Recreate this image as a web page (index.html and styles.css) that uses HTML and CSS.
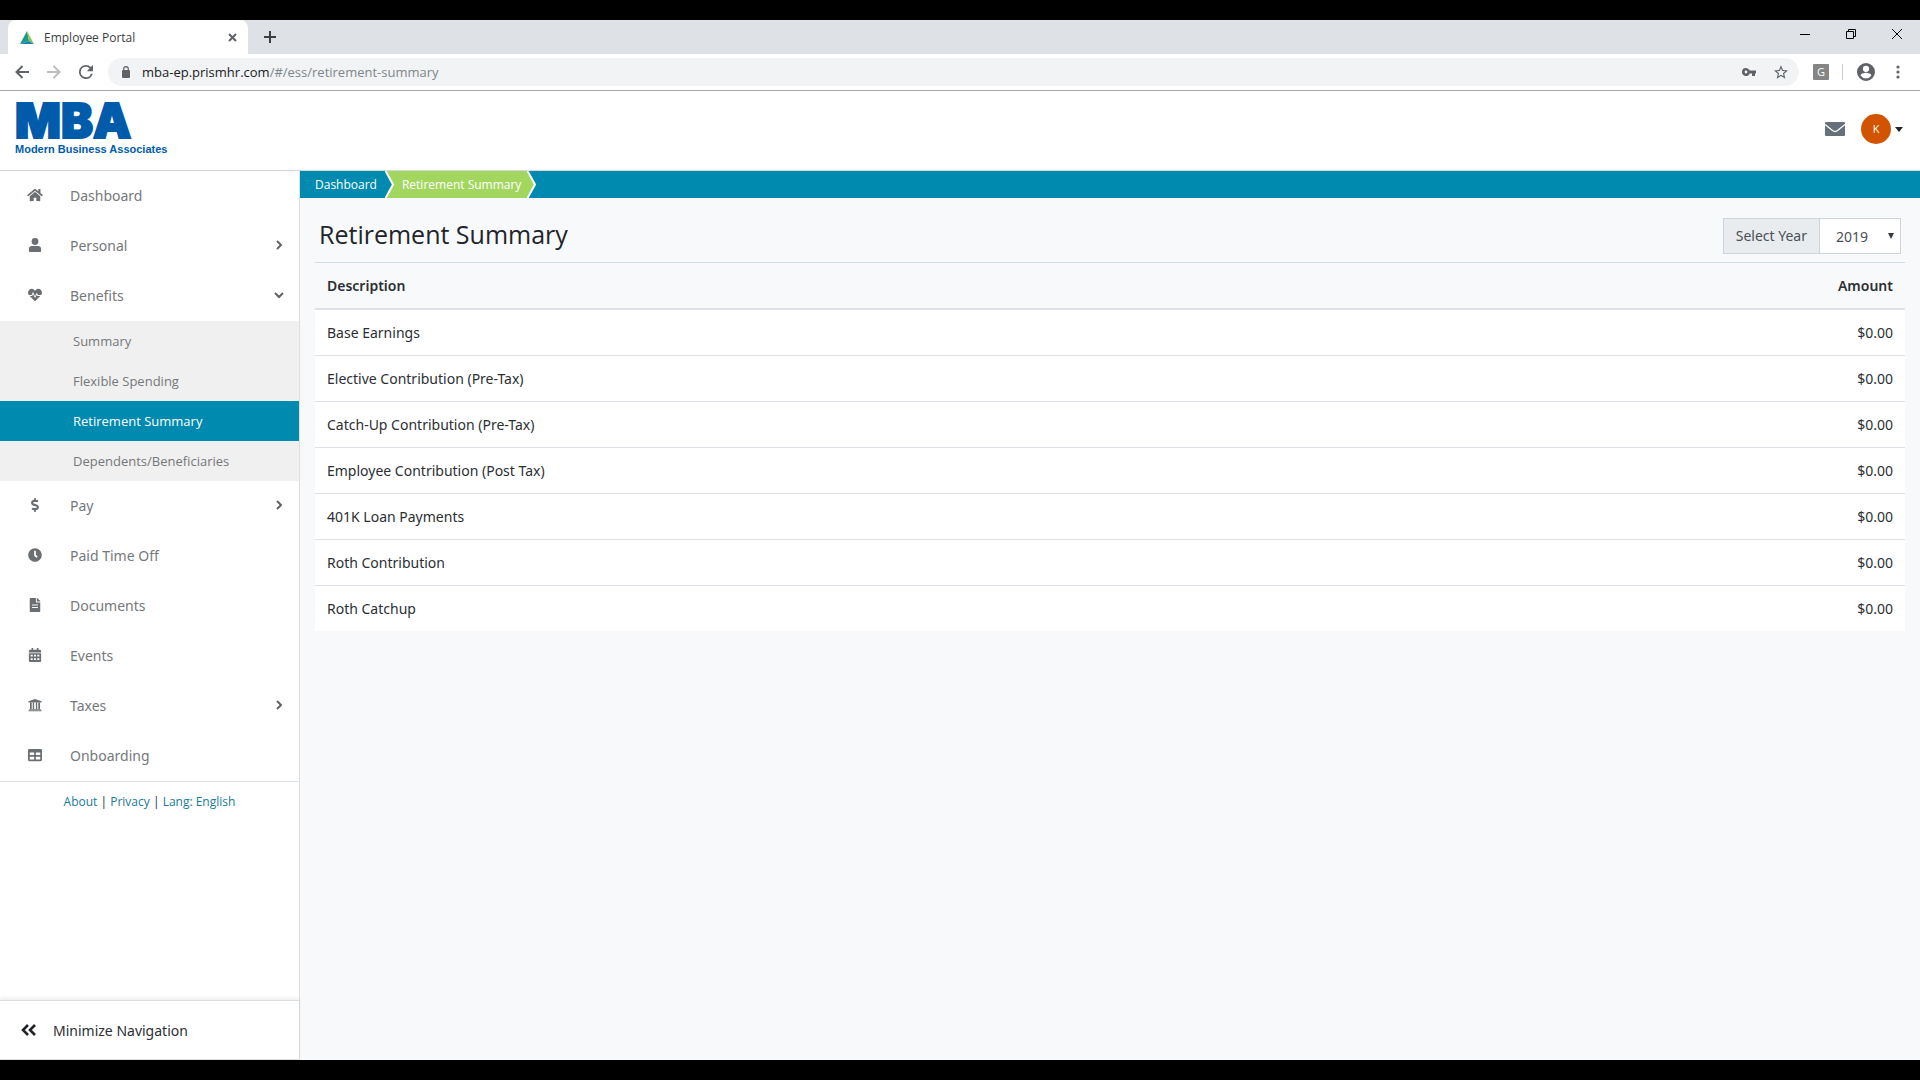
FILE: index.html
```html
<!DOCTYPE html>
<html lang="en">
<head>
<meta charset="utf-8">
<meta name="viewport" content="width=device-width, initial-scale=1">
<title>Employee Portal</title>
<link rel="stylesheet" href="styles.css">
</head>
<body>
<div class="browser">
  <div class="tab-strip">
    <div class="tab">
      <svg class="favicon" viewBox="0 0 14 13"><path d="M7 0 0 13l9-3z" fill="#1f9a86"/><path d="M7 0 9 10l5 3z" fill="#8fc552"/><path d="M0 13l9-3 5 3z" fill="#1683b5"/></svg>
      <span class="tab-title">Employee Portal</span>
      <button class="icon-button" aria-label="Close tab"><svg width="9" height="9" viewBox="0 0 9 9"><path d="M1 1l7 7M8 1L1 8" stroke="#5f6368" stroke-width="2" fill="none"/></svg></button>
    </div>
    <button class="icon-button new-tab" aria-label="New tab"><svg width="12" height="12" viewBox="0 0 12 12"><path d="M6 0v12M0 6h12" stroke="#3c4043" stroke-width="2"/></svg></button>
    <div class="window-controls">
      <button class="icon-button" aria-label="Minimize"><svg width="10" height="10" viewBox="0 0 10 10"><path d="M0 5.500h10" stroke="#000"/></svg></button>
      <button class="icon-button" aria-label="Restore"><svg width="10" height="10" viewBox="0 0 10 10"><path d="M.5 2.500h7v7h-7zM2.500 2.500v-2h7v7h-2" stroke="#000" fill="none"/></svg></button>
      <button class="icon-button" aria-label="Close"><svg width="10" height="10" viewBox="0 0 10 10"><path d="M0 0l10 10M10 0L0 10" stroke="#000"/></svg></button>
    </div>
  </div>
  <div class="toolbar">
    <button class="icon-button" aria-label="Back"><svg width="14" height="14" viewBox="0 0 14 14"><path d="M14 7H1.500M7.500 1l-6 6 6 6" stroke="#5f6368" stroke-width="2" fill="none"/></svg></button>
    <button class="icon-button" aria-label="Forward"><svg width="14" height="14" viewBox="0 0 14 14"><path d="M0 7h12.500M6.500 1l6 6-6 6" stroke="#bcbec0" stroke-width="2" fill="none"/></svg></button>
    <button class="icon-button" aria-label="Reload"><svg width="14" height="14" viewBox="4 4 16 16"><path fill="#5f6368" d="M17.650 6.350A7.960 7.960 0 0 0 12 4a8 8 0 1 0 7.730 10h-2.080A6 6 0 1 1 12 6c1.660 0 3.140.69 4.220 1.780L13 11h7V4z"/></svg></button>
    <div class="address">
      <svg width="8" height="12" viewBox="0 0 8 12"><path d="M0 5q0-1 1-1h6q1 0 1 1v6q0 1-1 1H1q-1 0-1-1z" fill="#5f6368"/><path d="M1.700 5V3a2.300 2.300 0 0 1 4.600 0v2" fill="none" stroke="#5f6368" stroke-width="1.200"/></svg>
      <span class="url">mba-ep.prismhr.com<span class="url-path">/#/ess/retirement-summary</span></span>
      <button class="icon-button" aria-label="Passwords"><svg width="14" height="8" viewBox="0 0 14 8"><path fill="#5f6368" fill-rule="evenodd" d="M4 0a4 4 0 1 0 3.700 5.400H10V8h3V5.400h1V2.600H7.700A4 4 0 0 0 4 0zm0 2.600a1.400 1.400 0 1 1 0 2.800 1.400 1.400 0 0 1 0-2.800z"/></svg></button>
      <button class="icon-button" aria-label="Bookmark"><svg width="14" height="14" viewBox="2 2 20 19"><path fill="#5f6368" d="M22 9.240l-7.190-.62L12 2 9.190 8.630 2 9.240l5.460 4.730L5.820 21 12 17.270 18.180 21l-1.630-7.030zM12 15.400l-3.760 2.270 1-4.280-3.320-2.880 4.380-.38L12 6.100l1.710 4.040 4.380.38-3.320 2.880 1 4.280z"/></svg></button>
    </div>
    <button class="extension" aria-label="Extension">G</button>
    <span class="divider"></span>
    <button class="icon-button profile" aria-label="Profile"><svg width="18" height="18" viewBox="2 2 20 20"><path fill="#5f6368" d="M12 2a10 10 0 1 0 0 20 10 10 0 0 0 0-20zm0 3a3.500 3.500 0 1 1 0 7 3.500 3.500 0 0 1 0-7zm0 14.200a7.200 7.200 0 0 1-6-3.220c.03-1.990 4-3.080 6-3.080s5.970 1.090 6 3.080a7.200 7.200 0 0 1-6 3.220z"/></svg></button>
    <button class="icon-button" aria-label="Menu"><svg width="4" height="14" viewBox="0 0 4 14"><g fill="#5f6368"><circle cx="2" cy="2" r="1.600"/><circle cx="2" cy="7" r="1.600"/><circle cx="2" cy="12" r="1.600"/></g></svg></button>
  </div>
</div>

<header class="site-header">
  <a class="logo" href="#">
    <span class="logo-name">MBA</span>
    <span class="logo-tag">Modern Business Associates</span>
  </a>
  <div class="account">
    <button class="icon-button" aria-label="Messages"><svg width="20" height="14" viewBox="0 0 20 14"><rect width="20" height="14" rx="1" fill="#66717b"/><path d="M0 2.500l7.500 6q2.500 2 5 0l7.500-6" fill="none" stroke="#fff" stroke-width="1.300"/></svg></button>
    <button class="user-menu"><span class="avatar">K</span><svg width="8" height="5" viewBox="0 0 8 5"><path d="M0 0h8L4 5z" fill="#212529"/></svg></button>
  </div>
</header>

<div class="layout">
  <nav class="sidebar">
    <ul class="menu">
      <li><a class="item" href="#"><svg class="item-icon" viewBox="0 0 576 512"><path d="M280.370 148.260L96 300.110V464a16 16 0 0 0 16 16l112.060-.29a16 16 0 0 0 15.920-16V368a16 16 0 0 1 16-16h64a16 16 0 0 1 16 16v95.640a16 16 0 0 0 16 16.050L464 480a16 16 0 0 0 16-16V300L295.670 148.260a12.190 12.190 0 0 0-15.300 0zM571.600 251.470L488 182.560V44.050a12 12 0 0 0-12-12h-56a12 12 0 0 0-12 12v72.610L318.470 43a48 48 0 0 0-61 0L4.340 251.470a12 12 0 0 0-1.600 16.900l25.500 31A12 12 0 0 0 45.150 301l235.220-193.740a12.190 12.190 0 0 1 15.300 0L530.900 301a12 12 0 0 0 16.900-1.600l25.500-31a12 12 0 0 0-1.700-16.930z"/></svg><span>Dashboard</span></a></li>
      <li><a class="item" href="#"><svg class="item-icon" viewBox="0 0 448 512"><circle cx="224" cy="128" r="124"/><path d="M110 288h228c62 0 110 48 110 110v66c0 26-22 48-48 48H48c-26 0-48-22-48-48v-66c0-62 48-110 110-110z"/></svg><span>Personal</span><svg class="chevron" viewBox="0 0 10 10"><path d="M3 1l4 4-4 4"/></svg></a></li>
      <li>
        <a class="item" href="#"><svg class="item-icon" viewBox="0 0 512 512"><path d="M320.200 243.800l-49.700 99.400c-6 12.100-23.400 11.700-28.900-.6l-56.900-126.300-30 71.700H60.600l182.500 186.500c7.100 7.300 18.600 7.300 25.700 0L451.400 288H342.300l-22.100-44.200zM473.700 73.900l-2.400-2.500c-51.500-52.600-135.800-52.600-187.400 0L256 100l-27.900-28.500c-51.500-52.700-135.900-52.700-187.400 0l-2.400 2.400C-10.400 123.700-12.500 203 31 256h102.400l35.900-86.200c5.400-12.900 23.600-13.200 29.400-.4l58.200 129.300 49-97.900c5.900-11.800 22.700-11.800 28.600 0l27.600 55.200H481c43.500-53 41.400-132.300-7.300-182.100z"/></svg><span>Benefits</span><svg class="chevron" viewBox="0 0 10 10"><path d="M1 3l4 4 4-4"/></svg></a>
        <ul class="submenu">
          <li><a class="subitem" href="#">Summary</a></li>
          <li><a class="subitem" href="#">Flexible Spending</a></li>
          <li><a class="subitem active" href="#" aria-current="page">Retirement Summary</a></li>
          <li><a class="subitem" href="#">Dependents/Beneficiaries</a></li>
        </ul>
      </li>
      <li><a class="item" href="#"><svg class="item-icon" viewBox="0 0 288 512"><path d="M209.200 233.400l-108-31.600C88.700 198.200 80 186.500 80 173.500c0-16.300 13.200-29.500 29.500-29.500h66.300c12.200 0 24.200 3.700 34.200 10.500 6.100 4.100 14.300 3.100 19.500-2l34.800-34c7.100-6.900 6.100-18.400-1.800-24.500C238 74.800 207.400 64.100 176 64V16c0-8.800-7.200-16-16-16h-32c-8.800 0-16 7.200-16 16v48h-2.500C45.800 64-5.400 118.700.5 183.600c4.200 46.100 39.400 83.600 83.800 96.600l102.500 30c12.500 3.700 21.200 15.300 21.200 28.300 0 16.300-13.200 29.500-29.500 29.500h-66.300C100 368 88 364.300 78 357.500c-6.100-4.100-14.300-3.100-19.500 2l-34.800 34c-7.100 6.900-6.100 18.400 1.800 24.500 24.500 19.200 55.100 29.900 86.500 30v48c0 8.800 7.200 16 16 16h32c8.800 0 16-7.200 16-16v-48.200c46.600-.9 90.300-28.600 105.700-72.700 21.500-61.600-14.600-124.800-72.500-141.700z"/></svg><span>Pay</span><svg class="chevron" viewBox="0 0 10 10"><path d="M3 1l4 4-4 4"/></svg></a></li>
      <li><a class="item" href="#"><svg class="item-icon" viewBox="0 0 512 512"><path d="M256 8C119 8 8 119 8 256s111 248 248 248 248-111 248-248S393 8 256 8zm92.490 313l-20 25a16 16 0 0 1-22.490 2.500l-67-49.720a40 40 0 0 1-15-31.230V112a16 16 0 0 1 16-16h32a16 16 0 0 1 16 16v144l58 42.500a16 16 0 0 1 2.490 22.500z"/></svg><span>Paid Time Off</span></a></li>
      <li><a class="item" href="#"><svg class="item-icon" viewBox="0 0 384 512"><path fill-rule="evenodd" d="M224 136V0H24C10.700 0 0 10.700 0 24v464c0 13.300 10.700 24 24 24h336c13.300 0 24-10.700 24-24V160H248c-13.200 0-24-10.800-24-24zM84 236h216v40H84zm0 92h216v40H84zM384 121.900v6.100H256V0h6.100c6.400 0 12.500 2.500 17 7l97.900 98c4.500 4.500 7 10.600 7 16.900z"/></svg><span>Documents</span></a></li>
      <li><a class="item" href="#"><svg class="item-icon" viewBox="0 0 448 512"><path fill-rule="evenodd" d="M0 160v-48c0-26 22-48 48-48h48V12q0-12 12-12h40q12 0 12 12v52h128V12q0-12 12-12h40q12 0 12 12v52h48c26 0 48 22 48 48v48zM0 192h448v272c0 26-22 48-48 48H48c-26 0-48-22-48-48zm64 52v64h76v-64zm122 0v64h76v-64zm122 0v64h76v-64zM64 372v64h76v-64zm122 0v64h76v-64zm122 0v64h76v-64z"/></svg><span>Events</span></a></li>
      <li><a class="item" href="#"><svg class="item-icon" viewBox="0 0 512 512"><path d="M256 32L16 122v38h480v-38zM16 448h480v40H16zM44 404h424v28H44zM72 176h64v228H72zm102 0h50v228h-50zm114 0h50v228h-50zm88 0h64v228h-64z"/></svg><span>Taxes</span><svg class="chevron" viewBox="0 0 10 10"><path d="M3 1l4 4-4 4"/></svg></a></li>
      <li><a class="item" href="#"><svg class="item-icon" viewBox="0 0 512 512"><path fill-rule="evenodd" d="M464 32H48C22 32 0 54 0 80v352c0 26 22 48 48 48h416c26 0 48-22 48-48V80c0-26-22-48-48-48zM224 416H64v-96h160zm0-160H64v-96h160zm224 160H288v-96h160zm0-160H288v-96h160z"/></svg><span>Onboarding</span></a></li>
    </ul>
    <div class="legal"><a href="#">About</a> | <a href="#">Privacy</a> | <a href="#">Lang: English</a></div>
    <button class="minimize"><svg width="16" height="12" viewBox="0 0 16 12"><path d="M7 1L2 6l5 5M14 1L9 6l5 5" fill="none" stroke="#212529" stroke-width="2.600"/></svg><span>Minimize Navigation</span></button>
  </nav>

  <main class="content">
    <nav class="breadcrumb" aria-label="Breadcrumb">
      <a class="crumb" href="#">Dashboard</a>
      <svg class="crumb-edge" viewBox="0 0 10 27"><path class="edge-current" d="M0 0h10v27H0z"/><path class="edge-bar" d="M0 0l8 13.500L0 27z"/><path class="edge-line" d="M0-1l8 14.500L0 28"/></svg>
      <span class="crumb current">Retirement Summary</span>
      <svg class="crumb-edge" viewBox="0 0 10 27"><path class="edge-current" d="M0 0l8 13.500L0 27z"/><path class="edge-line" d="M0-1l8 14.500L0 28"/></svg>
    </nav>
    <div class="page-head">
      <h1>Retirement Summary</h1>
      <div class="year">
        <label for="year">Select Year</label>
        <div class="year-field">
          <select id="year"><option>2019</option><option>2018</option></select>
          <svg class="year-arrow" viewBox="0 0 6 6"><path d="M0 0h6L3 6z" fill="#343a40"/></svg>
        </div>
      </div>
    </div>
    <table class="summary">
      <thead><tr><th scope="col">Description</th><th scope="col">Amount</th></tr></thead>
      <tbody>
        <tr><td>Base Earnings</td><td>$0.00</td></tr>
        <tr><td>Elective Contribution (Pre-Tax)</td><td>$0.00</td></tr>
        <tr><td>Catch-Up Contribution (Pre-Tax)</td><td>$0.00</td></tr>
        <tr><td>Employee Contribution (Post Tax)</td><td>$0.00</td></tr>
        <tr><td>401K Loan Payments</td><td>$0.00</td></tr>
        <tr><td>Roth Contribution</td><td>$0.00</td></tr>
        <tr><td>Roth Catchup</td><td>$0.00</td></tr>
      </tbody>
    </table>
  </main>
</div>
</body>
</html>
```
FILE: styles.css
```css
* { box-sizing: border-box; }

body {
  margin: 0;
  padding: 20px 0;
  min-height: 100vh;
  display: flex;
  flex-direction: column;
  background: #000;
  color: #2b2f33;
  font: 14px/21px "Noto Sans", "Open Sans", sans-serif;
}

svg { display: block; flex: none; }
a { color: inherit; text-decoration: none; }
ul { list-style: none; margin: 0; padding: 0; }
button { font: inherit; color: inherit; border: 0; padding: 0; background: none; }
.icon-button { display: flex; }

.browser, .submenu, .legal, .breadcrumb, .avatar, h1 { font-family: "Open Sans", "Noto Sans", sans-serif; }

/* Browser window */
.tab-strip {
  display: flex;
  align-items: center;
  height: 34px;
  padding-left: 8px;
  background: #dee1e6;
}
.tab {
  display: flex;
  align-items: center;
  gap: 10px;
  width: 240px;
  height: 34px;
  padding: 0 11px 0 12px;
  border-radius: 8px 8px 0 0;
  background: #fff;
  color: #3c4043;
  font-size: 12px;
}
.favicon { width: 14px; height: 13px; }
.tab-title { flex: 1; }
.new-tab { margin-left: 16px; }
.window-controls {
  display: flex;
  gap: 36px;
  margin-left: auto;
  padding: 0 18px 6px 0;
}
.toolbar {
  display: flex;
  align-items: center;
  gap: 18px;
  height: 37px;
  padding: 0 20px 0 15px;
  border-bottom: 1px solid #a8a8a8;
  background: #fff;
}
.address {
  flex: 1;
  display: flex;
  align-items: center;
  gap: 18px;
  height: 28px;
  margin-right: -4px;
  margin-left: -3px;
  padding: 0 11px 0 14px;
  border-radius: 14px;
  background: #f1f3f4;
}
.url { flex: 1; margin-left: -6px; font-size: 13px; color: #202124; }
.url-path { color: #80868b; }
.extension {
  width: 16px;
  height: 16px;
  margin-right: -5px;
  border-radius: 1px;
  background: #858585;
  color: #fff;
  font-size: 11px;
  line-height: 16px;
}
.divider { width: 1px; height: 16px; margin-right: -4px; background: #c8cacd; }
.profile { margin-right: 3px; }

/* Site header */
.site-header {
  display: flex;
  align-items: center;
  justify-content: space-between;
  height: 80px;
  padding: 0 17px 3px 15px;
  border-bottom: 1px solid #d5d8da;
  background: #fff;
}
.logo { display: flex; flex-direction: column; color: #005baa; }
.logo-name {
  font: 900 48px/38px Inter, "DejaVu Sans", sans-serif;
  -webkit-text-stroke: 2px #005baa;
}
.logo-tag { padding-top: 2px; font: bold 11px/14px "Liberation Sans", sans-serif; }
.account { display: flex; align-items: center; gap: 16px; }
.user-menu { display: flex; align-items: center; gap: 4px; }
.avatar {
  width: 30px;
  height: 30px;
  border-radius: 50%;
  background: #d35400;
  color: #fff;
  font-size: 11px;
  line-height: 30px;
  text-align: center;
}

/* Page frame */
.layout { flex: 1; display: flex; background: #f8f9fb; }
.sidebar {
  flex: none;
  display: flex;
  flex-direction: column;
  width: 300px;
  border-right: 1px solid #dcdfe1;
  background: #fff;
}
.menu { border-bottom: 1px solid #dee2e6; color: #75787b; }
.item { display: flex; align-items: center; height: 50px; padding: 0 15px 2px 27px; }
.item span { flex: 1; margin-left: 27px; }
.item-icon { width: 16px; height: 14px; fill: #6c6f72; }
.chevron { width: 10px; height: 10px; fill: none; stroke: #606366; stroke-width: 2; }
.submenu { background: #f0f0f0; font-size: 13px; }
.subitem { display: block; padding-left: 73px; line-height: 40px; }
.active { background: #008aaf; color: #fff; }
.legal { padding: 9px 0; font-size: 12px; text-align: center; }
.legal a { color: #1b7a99; }
.minimize {
  display: flex;
  align-items: center;
  gap: 16px;
  height: 60px;
  margin-top: auto;
  padding-left: 21px;
  border-top: 1px solid #dcdfe1;
  border-bottom: 1px solid #dcdfe1;
  box-shadow: 0 -2px 4px rgba(0, 0, 0, .07);
}

/* Content */
.content { flex: 1; min-width: 0; }
.breadcrumb {
  display: flex;
  height: 27px;
  background: #008aaf;
  color: #fff;
  font-size: 12px;
  line-height: 27px;
}
.crumb { padding: 0 8px 0 15px; }
.current { background: #a2d65e; padding: 0 6px 0 7px; }
.crumb-edge { width: 10px; height: 27px; }
.edge-current { fill: #a2d65e; }
.edge-bar { fill: #008aaf; }
.edge-line { fill: none; stroke: #fff; stroke-width: 2; }
.page-head {
  display: flex;
  align-items: center;
  justify-content: space-between;
  height: 65px;
  margin: 0 15px;
  padding: 12px 4px 0;
  border-bottom: 1px solid #d3dde3;
}
h1 { margin: 0; padding-bottom: 4px; font-size: 25px; font-weight: 400; line-height: 36px; color: #212529; }
.year { display: flex; height: 36px; color: #495057; border: 1px solid #ced4da; }
.year label { padding: 0 12px; background: #e9ecef; border-right: 1px solid #ced4da; line-height: 34px; }
.year-field { position: relative; width: 80px; }
.year select {
  width: 100%;
  height: 34px;
  padding: 0 16px;
  border: 0;
  border-radius: 0;
  background: #fff;
  color: #495057;
  font: inherit;
  appearance: none;
}
.year-arrow { position: absolute; top: 14px; right: 6px; width: 6px; height: 6px; pointer-events: none; }
.summary { width: calc(100% - 30px); margin: 0 15px; border-collapse: collapse; }
.summary th, .summary td { padding: 12px; text-align: left; }
.summary th { font-weight: 600; border-bottom: 2px solid #dee2e6; }
.summary td { background: #fff; border-top: 1px solid #dee2e6; }
.summary th:last-child, .summary td:last-child { text-align: right; }
```
